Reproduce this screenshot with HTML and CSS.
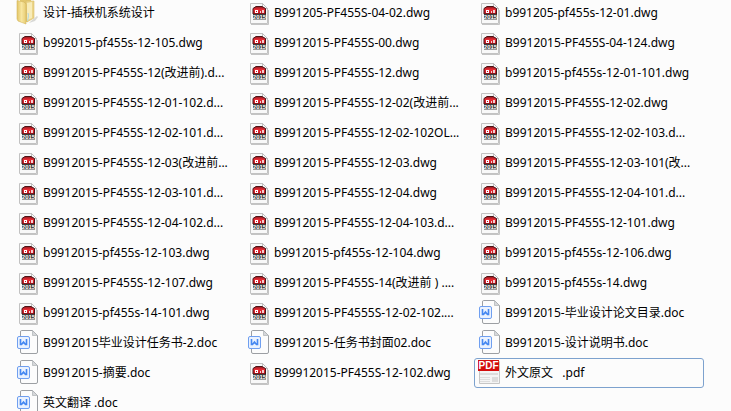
FILE: index.html
```
<!DOCTYPE html>
<html lang="zh-CN">
<head>
    <meta charset="UTF-8">
    <meta name="viewport" content="width=device-width, initial-scale=1.0">
    <title>设计-插秧机系统设计</title>
    <link rel="stylesheet" href="styles.css">
</head>
<body>
    <!-- file type icons -->
    <svg class="sprite" aria-hidden="true">
        <defs>
            <linearGradient id="folder-front" x1="0" x2="1" y1="0" y2="0">
                <stop offset="0" stop-color="#e2c566"/>
                <stop offset="0.5" stop-color="#f8e6a0"/>
                <stop offset="1" stop-color="#e8cd74"/>
            </linearGradient>
            <linearGradient id="cad-red" x1="0" x2="0" y1="0" y2="1">
                <stop offset="0" stop-color="#8e1a20"/>
                <stop offset="0.4" stop-color="#e52a33"/>
                <stop offset="1" stop-color="#c4161f"/>
            </linearGradient>
        </defs>
        <symbol id="folder" viewBox="1 1 28 28">
            <path d="M19 23l6-5 1 1-3 4-6 2z" fill="#c9c9c5" opacity=".7"/>
            <path d="M8 2h11v18l-4 4H8z" fill="#e3c76d"/>
            <path d="M14 3h8v17l-7 4z" fill="#ecd588" stroke="#d8bc68" stroke-width=".6"/>
            <path d="M15 5l5-1v16l-5 2z" fill="#f8ecb9"/>
            <path d="M5 2.500l7 1.500 2 2v20L6 23l-1-2z" fill="url(#folder-front)" stroke="#d3b65f" stroke-width=".6"/>
            <path d="M16 15c1 3 0 5-.5 8" fill="none" stroke="#b5d8e0"/>
        </symbol>
        <symbol id="dwg" viewBox="1 1 28 28">
            <path d="M8 26.500h17.500V12" fill="none" stroke="#c4c4c4"/>
            <path d="M7.500 5.500h12l5 5v15h-17z" fill="#f8f8f8" stroke="#c2c2c2"/>
            <path d="M19.500 5.500v5h5z" fill="#fff" stroke="#b4b4b4" stroke-width=".8"/>
            <path d="M10 10.500l3-2h6l3.500 2V16H10z" fill="url(#cad-red)" stroke="#4b1518"/>
            <path d="M12 12h3v3h-3z" fill="#fff"/>
            <path d="M13 13h1v1h-1z" fill="#c4161f"/>
            <path d="M17 13h1v2h-1zM19 12h2v3h-2z" fill="#f4cfd0"/>
            <path d="M10 16h13v5.500H10z" fill="#3c3c3c"/>
            <text x="16.500" y="21" class="cad-year">2015</text>
        </symbol>
        <symbol id="doc" viewBox="1 1 28 28">
            <path d="M9.500 2.500h11l5 5V24q0 1.500-1.500 1.500H10q-1.500 0-1.500-1.500V4q0-1.500 1-1.500z" fill="#fcfcfc" stroke="#9c9fa3"/>
            <path d="M20.500 2.500v5h5z" fill="#d5d7da" stroke="#aeb1b5" stroke-width=".7"/>
            <rect x="5.500" y="8.500" width="12" height="12" rx="1.500" fill="#eaf2ff" stroke="#6f9ff0"/>
            <path d="M8.500 11v5.500h1l2-2.500 2 2.500h1V11" fill="none" stroke="#4688f1" stroke-width="1.600"/>
        </symbol>
        <symbol id="pdf" viewBox="1 1 28 28">
            <path d="M5.500 3.500h20v22h-20z" fill="#f4f4f4" stroke="#c6c6c6"/>
            <path d="M4 2h21v11H4z" fill="#d30c0c"/>
            <text x="14.500" y="11" class="pdf-label">PDF</text>
            <path d="M6 15h18v2H6zM6 19h10v1H6zM6 21h10v1H6zM6 23h10v1H6zM18 19h6v5h-6z" fill="#dcdcdc"/>
        </symbol>
    </svg>

    <main class="explorer">
        <ul class="files">
            <li><a class="file" href="#"><svg class="icon"><use href="#folder"/></svg><span>设计-插秧机系统设计</span></a></li>
            <li><a class="file" href="#"><svg class="icon"><use href="#dwg"/></svg><span>B991205-PF455S-04-02.dwg</span></a></li>
            <li><a class="file" href="#"><svg class="icon"><use href="#dwg"/></svg><span>b991205-pf455s-12-01.dwg</span></a></li>

            <li><a class="file" href="#"><svg class="icon"><use href="#dwg"/></svg><span>b992015-pf455s-12-105.dwg</span></a></li>
            <li><a class="file" href="#"><svg class="icon"><use href="#dwg"/></svg><span>B9912015-PF455S-00.dwg</span></a></li>
            <li><a class="file" href="#"><svg class="icon"><use href="#dwg"/></svg><span>B9912015-PF455S-04-124.dwg</span></a></li>

            <li><a class="file" href="#"><svg class="icon"><use href="#dwg"/></svg><span>B9912015-PF455S-12(改进前).d...</span></a></li>
            <li><a class="file" href="#"><svg class="icon"><use href="#dwg"/></svg><span>B9912015-PF455S-12.dwg</span></a></li>
            <li><a class="file" href="#"><svg class="icon"><use href="#dwg"/></svg><span>b9912015-pf455s-12-01-101.dwg</span></a></li>

            <li><a class="file" href="#"><svg class="icon"><use href="#dwg"/></svg><span>B9912015-PF455S-12-01-102.d...</span></a></li>
            <li><a class="file" href="#"><svg class="icon"><use href="#dwg"/></svg><span>B9912015-PF455S-12-02(改进前...</span></a></li>
            <li><a class="file" href="#"><svg class="icon"><use href="#dwg"/></svg><span>B9912015-PF455S-12-02.dwg</span></a></li>

            <li><a class="file" href="#"><svg class="icon"><use href="#dwg"/></svg><span>B9912015-PF455S-12-02-101.d...</span></a></li>
            <li><a class="file" href="#"><svg class="icon"><use href="#dwg"/></svg><span>B9912015-PF455S-12-02-102OL...</span></a></li>
            <li><a class="file" href="#"><svg class="icon"><use href="#dwg"/></svg><span>B9912015-PF455S-12-02-103.d...</span></a></li>

            <li><a class="file" href="#"><svg class="icon"><use href="#dwg"/></svg><span>B9912015-PF455S-12-03(改进前...</span></a></li>
            <li><a class="file" href="#"><svg class="icon"><use href="#dwg"/></svg><span>B9912015-PF455S-12-03.dwg</span></a></li>
            <li><a class="file" href="#"><svg class="icon"><use href="#dwg"/></svg><span>B9912015-PF455S-12-03-101(改...</span></a></li>

            <li><a class="file" href="#"><svg class="icon"><use href="#dwg"/></svg><span>B9912015-PF455S-12-03-101.d...</span></a></li>
            <li><a class="file" href="#"><svg class="icon"><use href="#dwg"/></svg><span>B9912015-PF455S-12-04.dwg</span></a></li>
            <li><a class="file" href="#"><svg class="icon"><use href="#dwg"/></svg><span>B9912015-PF455S-12-04-101.d...</span></a></li>

            <li><a class="file" href="#"><svg class="icon"><use href="#dwg"/></svg><span>B9912015-PF455S-12-04-102.d...</span></a></li>
            <li><a class="file" href="#"><svg class="icon"><use href="#dwg"/></svg><span>B9912015-PF455S-12-04-103.d...</span></a></li>
            <li><a class="file" href="#"><svg class="icon"><use href="#dwg"/></svg><span>B9912015-PF455S-12-101.dwg</span></a></li>

            <li><a class="file" href="#"><svg class="icon"><use href="#dwg"/></svg><span>b9912015-pf455s-12-103.dwg</span></a></li>
            <li><a class="file" href="#"><svg class="icon"><use href="#dwg"/></svg><span>b9912015-pf455s-12-104.dwg</span></a></li>
            <li><a class="file" href="#"><svg class="icon"><use href="#dwg"/></svg><span>b9912015-pf455s-12-106.dwg</span></a></li>

            <li><a class="file" href="#"><svg class="icon"><use href="#dwg"/></svg><span>B9912015-PF455S-12-107.dwg</span></a></li>
            <li><a class="file" href="#"><svg class="icon"><use href="#dwg"/></svg><span>B9912015-PF455S-14(改进前 ) ....</span></a></li>
            <li><a class="file" href="#"><svg class="icon"><use href="#dwg"/></svg><span>b9912015-pf455s-14.dwg</span></a></li>

            <li><a class="file" href="#"><svg class="icon"><use href="#dwg"/></svg><span>b9912015-pf455s-14-101.dwg</span></a></li>
            <li><a class="file" href="#"><svg class="icon"><use href="#dwg"/></svg><span>B9912015-PF4555S-12-02-102....</span></a></li>
            <li><a class="file" href="#"><svg class="icon"><use href="#doc"/></svg><span>B9912015-毕业设计论文目录.doc</span></a></li>

            <li><a class="file" href="#"><svg class="icon"><use href="#doc"/></svg><span>B9912015毕业设计任务书-2.doc</span></a></li>
            <li><a class="file" href="#"><svg class="icon"><use href="#doc"/></svg><span>B9912015-任务书封面02.doc</span></a></li>
            <li><a class="file" href="#"><svg class="icon"><use href="#doc"/></svg><span>B9912015-设计说明书.doc</span></a></li>

            <li><a class="file" href="#"><svg class="icon"><use href="#doc"/></svg><span>B9912015-摘要.doc</span></a></li>
            <li><a class="file" href="#"><svg class="icon"><use href="#dwg"/></svg><span>B99912015-PF455S-12-102.dwg</span></a></li>
            <li><a class="file selected" href="#"><svg class="icon"><use href="#pdf"/></svg><span>外文原文   .pdf</span></a></li>

            <li><a class="file" href="#"><svg class="icon"><use href="#doc"/></svg><span>英文翻译 .doc</span></a></li>
        </ul>
    </main>
</body>
</html>
```
FILE: styles.css
```
body {
    margin: 0;
    background-color: #fcfcfc;
    color: #000;
    font-family: "Noto Sans", "Noto Sans CJK SC", sans-serif;
    font-size: 12px;
}

.sprite {
    position: absolute;
    width: 0;
    height: 0;
    visibility: hidden;
}

.explorer {
    height: 100vh;
    overflow: hidden;
}

/* list is scrolled down a little, so the first row is cut at the top */
.files {
    display: grid;
    grid-template-columns: repeat(auto-fill, 230px);
    column-gap: 1px;
    list-style: none;
    margin: -2px 0 0;
    padding: 0 0 0 12px;
}

.file {
    display: flex;
    align-items: center;
    gap: 2px;
    box-sizing: border-box;
    height: 30px;
    border: 1px solid transparent;
    border-radius: 3px;
    color: inherit;
    line-height: 18px;
    text-decoration: none;
    white-space: pre;
}

.file.selected {
    border-color: #7da2ce;
}

.icon {
    flex: none;
    width: 28px;
    height: 28px;
}

.cad-year {
    fill: #fff;
    font: bold 6px "Liberation Sans", sans-serif;
    text-anchor: middle;
}

.pdf-label {
    fill: #fff;
    font: bold 10px "Liberation Sans", sans-serif;
    text-anchor: middle;
}
```
